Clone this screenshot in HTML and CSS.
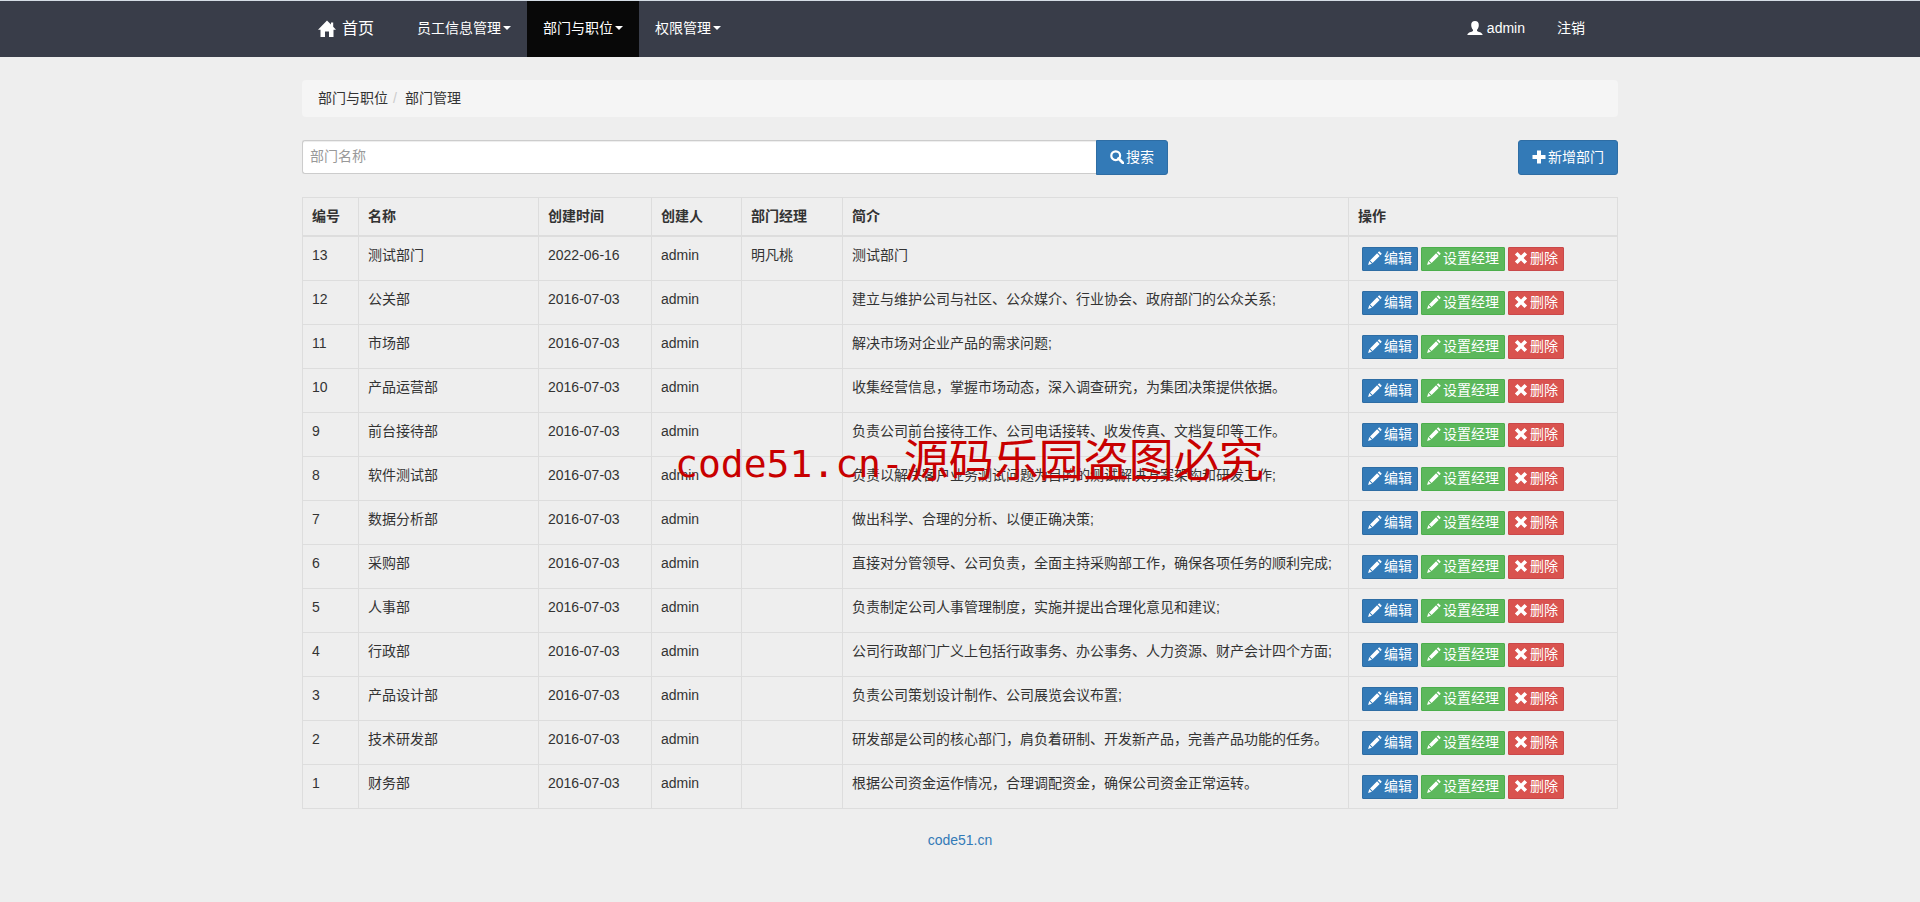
FILE: index.html
```html
<!DOCTYPE html>
<html lang="zh-CN">
<head>
<meta charset="utf-8">
<title>部门管理</title>
<link rel="stylesheet" href="styles.css">
</head>
<body>
<svg class="sprite" aria-hidden="true">
  <symbol id="i-home" viewBox="0 0 18 18"><path d="M9 .5 13 4.500V2.500H15.200V6.700L18 9.700H15.500V17H11V11.500H7V17H2.500V9.700H0L9 .5Z"/></symbol>
  <symbol id="i-user" viewBox="0 0 16 16"><path d="M8 1C10.500 1 11.800 2.600 11.800 5C11.800 7.300 11 8.800 10 9.700V11C11 12 15.600 12.300 15.600 15H.4C.4 12.300 5 12 6 11V9.700C5 8.800 4.200 7.300 4.200 5C4.200 2.600 5.500 1 8 1Z"/></symbol>
  <symbol id="i-search" viewBox="0 0 14 14"><circle cx="5.700" cy="5.700" r="4.400" fill="none" stroke="currentColor" stroke-width="2.200"/><path d="M8.500 8.500 13 13" stroke="currentColor" stroke-width="2.800" stroke-linecap="round"/></symbol>
  <symbol id="i-plus" viewBox="0 0 14 14"><path d="M5 .5h4v4.500H13.500v4H9V13.500H5V9H.5V5h4.500z"/></symbol>
  <symbol id="i-pencil" viewBox="0 0 14 14"><path d="M11.200.2 13.800 2.800 12.400 4.200 9.800 1.600ZM9.100 2.300 11.700 4.900 4.600 12 2 9.400ZM1.300 10.100 3.900 12.700.1 13.900Z"/></symbol>
  <symbol id="i-remove" viewBox="0 0 14 14"><path d="M3.500.9 7 4.400 10.500.9 13.100 3.500 9.600 7l3.500 3.500-2.600 2.600L7 9.600l-3.500 3.500L.9 10.500 4.400 7 .9 3.500Z"/></symbol>
</svg>

<nav class="navbar">
  <div class="container navbar-inner">
    <a class="brand" href="#"><svg class="icon-lg"><use href="#i-home"/></svg>首页</a>
    <ul class="nav">
      <li><a class="nav-link" href="#">员工信息管理<span class="caret"></span></a></li>
      <li><a class="nav-link active" href="#">部门与职位<span class="caret"></span></a></li>
      <li><a class="nav-link" href="#">权限管理<span class="caret"></span></a></li>
    </ul>
    <ul class="nav nav-right">
      <li><a class="nav-link user" href="#"><svg class="icon-md"><use href="#i-user"/></svg>admin</a></li>
      <li><a class="nav-link" href="#">注销</a></li>
    </ul>
  </div>
</nav>

<main class="container">
  <ol class="breadcrumb"><li>部门与职位</li><li>部门管理</li></ol>

  <div class="toolbar">
    <form class="search">
      <input class="search-input" type="text" placeholder="部门名称" aria-label="部门名称">
      <button class="btn btn-primary" type="button"><svg class="icon"><use href="#i-search"/></svg>搜索</button>
    </form>
    <button class="btn btn-primary" type="button"><svg class="icon"><use href="#i-plus"/></svg>新增部门</button>
  </div>

  <table class="table">
    <colgroup><col class="c-id"><col class="c-name"><col class="c-date"><col class="c-by"><col class="c-mgr"><col class="c-desc"><col class="c-ops"></colgroup>
    <thead><tr><th>编号</th><th>名称</th><th>创建时间</th><th>创建人</th><th>部门经理</th><th>简介</th><th>操作</th></tr></thead>
    <tbody id="rows"></tbody>
  </table>
</main>

<footer class="footer"><a href="#">code51.cn</a></footer>

<div class="watermark"><span class="watermark-latin">code51.cn-</span>源码乐园盗图必究</div>

<script src="script.js"></script>
</body>
</html>
```
FILE: styles.css
```css
* { box-sizing: border-box; }

body {
  margin: 0;
  position: relative;
  background: #eee;
  color: #333;
  font: 14px/20px "Liberation Sans", "Noto Sans CJK SC", sans-serif;
}

a { text-decoration: none; }
ul, ol { list-style: none; margin: 0; padding: 0; }

.sprite { position: absolute; width: 0; height: 0; }
.icon, .icon-md, .icon-lg { flex: none; fill: currentColor; }
.icon { width: 14px; height: 14px; }
.icon-md { width: 16px; height: 16px; }
.icon-lg { width: 18px; height: 18px; }

.container {
  width: calc(100% - 32px);
  max-width: 1316px;
  margin: 0 auto;
}

.navbar {
  background: #393d49;
  border-top: 1px solid #d5dde5;
}
.navbar-inner { display: flex; }
.brand {
  display: flex;
  align-items: center;
  gap: 6px;
  padding: 0 16px;
  margin-right: 11px;
  color: #fff;
  font-size: 16px;
}
.nav { display: flex; }
.nav-right { margin-left: auto; margin-right: 17px; }
.nav-link {
  display: flex;
  align-items: center;
  gap: 2px;
  padding: 17px 16px 19px;
  color: #fff;
}
.nav-link.active { background: #080808; }
.nav-link.user { gap: 4px; }
.caret {
  border: 4px solid transparent;
  border-top-color: currentColor;
  border-bottom: 0;
}

.breadcrumb {
  display: flex;
  margin: 23px 0;
  padding: 8px 16px;
  line-height: 21px;
  background: #f5f5f5;
  border-radius: 4px;
}
.breadcrumb li + li::before { content: "/"; padding: 0 8px 0 5px; color: #ccc; }

.toolbar {
  display: flex;
  justify-content: space-between;
  margin-bottom: 22px;
}
.search { display: flex; width: 65.8%; }
.search-input {
  flex: 1;
  min-width: 0;
  height: 34px;
  padding: 0 7px 2px;
  border: 1px solid #ccc;
  border-right: 0;
  border-radius: 3px 0 0 3px;
  background: #fff;
  color: #555;
  font: inherit;
  box-shadow: inset 0 1px 1px rgba(0, 0, 0, .075);
}
.search-input::placeholder { color: #999; }

.btn {
  display: inline-flex;
  align-items: center;
  gap: 2px;
  height: 35px;
  padding: 0 13px 2px;
  border: 1px solid;
  border-radius: 3px;
  color: #fff;
  font: inherit;
  white-space: nowrap;
}
.search .btn { border-radius: 0 3px 3px 0; }
.btn-primary { background: #337ab7; border-color: #2e6da4; }
.btn-success { background: #5cb85c; border-color: #4cae4c; }
.btn-danger { background: #d9534f; border-color: #c9484a; }
.btn-xs { height: 24px; padding: 0 5px 2px; border-radius: 1px; }

.table {
  width: 100%;
  table-layout: fixed;
  border-collapse: collapse;
  border: 1px solid #ddd;
}
.table th, .table td {
  padding: 8px 9px;
  border: 1px solid #ddd;
  text-align: left;
  vertical-align: top;
}
.table th { padding-bottom: 9px; border-bottom-width: 2px; }
.table td.ops { padding: 10px 13px 9px; }
.actions { display: flex; gap: 3px; }
.c-id { width: 56px; }
.c-name { width: 180px; }
.c-date { width: 113px; }
.c-by { width: 90px; }
.c-mgr { width: 101px; }
.c-ops { width: 269px; }

.footer { padding: 21px 0; text-align: center; }
.footer a { color: #337ab7; }

.watermark {
  position: absolute;
  top: 428px;
  left: calc(50% - 285px);
  color: #c80000;
  font: 45px/60px "Noto Sans CJK SC", sans-serif;
  white-space: nowrap;
  pointer-events: none;
}
.watermark-latin { font: 38px/60px "DejaVu Sans Mono", monospace; }
```
FILE: script.js
```javascript
const departments = [
  [13, "测试部门", "2022-06-16", "admin", "明凡桃", "测试部门"],
  [12, "公关部", "2016-07-03", "admin", "", "建立与维护公司与社区、公众媒介、行业协会、政府部门的公众关系;"],
  [11, "市场部", "2016-07-03", "admin", "", "解决市场对企业产品的需求问题;"],
  [10, "产品运营部", "2016-07-03", "admin", "", "收集经营信息，掌握市场动态，深入调查研究，为集团决策提供依据。"],
  [9, "前台接待部", "2016-07-03", "admin", "", "负责公司前台接待工作、公司电话接转、收发传真、文档复印等工作。"],
  [8, "软件测试部", "2016-07-03", "admin", "", "负责以解决客户业务测试问题为目的的测试解决方案架构和研发工作;"],
  [7, "数据分析部", "2016-07-03", "admin", "", "做出科学、合理的分析、以便正确决策;"],
  [6, "采购部", "2016-07-03", "admin", "", "直接对分管领导、公司负责，全面主持采购部工作，确保各项任务的顺利完成;"],
  [5, "人事部", "2016-07-03", "admin", "", "负责制定公司人事管理制度，实施并提出合理化意见和建议;"],
  [4, "行政部", "2016-07-03", "admin", "", "公司行政部门广义上包括行政事务、办公事务、人力资源、财产会计四个方面;"],
  [3, "产品设计部", "2016-07-03", "admin", "", "负责公司策划设计制作、公司展览会议布置;"],
  [2, "技术研发部", "2016-07-03", "admin", "", "研发部是公司的核心部门，肩负着研制、开发新产品，完善产品功能的任务。"],
  [1, "财务部", "2016-07-03", "admin", "", "根据公司资金运作情况，合理调配资金，确保公司资金正常运转。"]
];

const actions = [
  ["primary", "pencil", "编辑"],
  ["success", "pencil", "设置经理"],
  ["danger", "remove", "删除"]
];

const buttons = actions.map(([kind, icon, label]) =>
  `<button class="btn btn-xs btn-${kind}" type="button"><svg class="icon"><use href="#i-${icon}"/></svg>${label}</button>`
).join("");

document.getElementById("rows").innerHTML = departments.map(row =>
  `<tr>${row.map(value => `<td>${value}</td>`).join("")}<td class="ops"><div class="actions">${buttons}</div></td></tr>`
).join("");
```
